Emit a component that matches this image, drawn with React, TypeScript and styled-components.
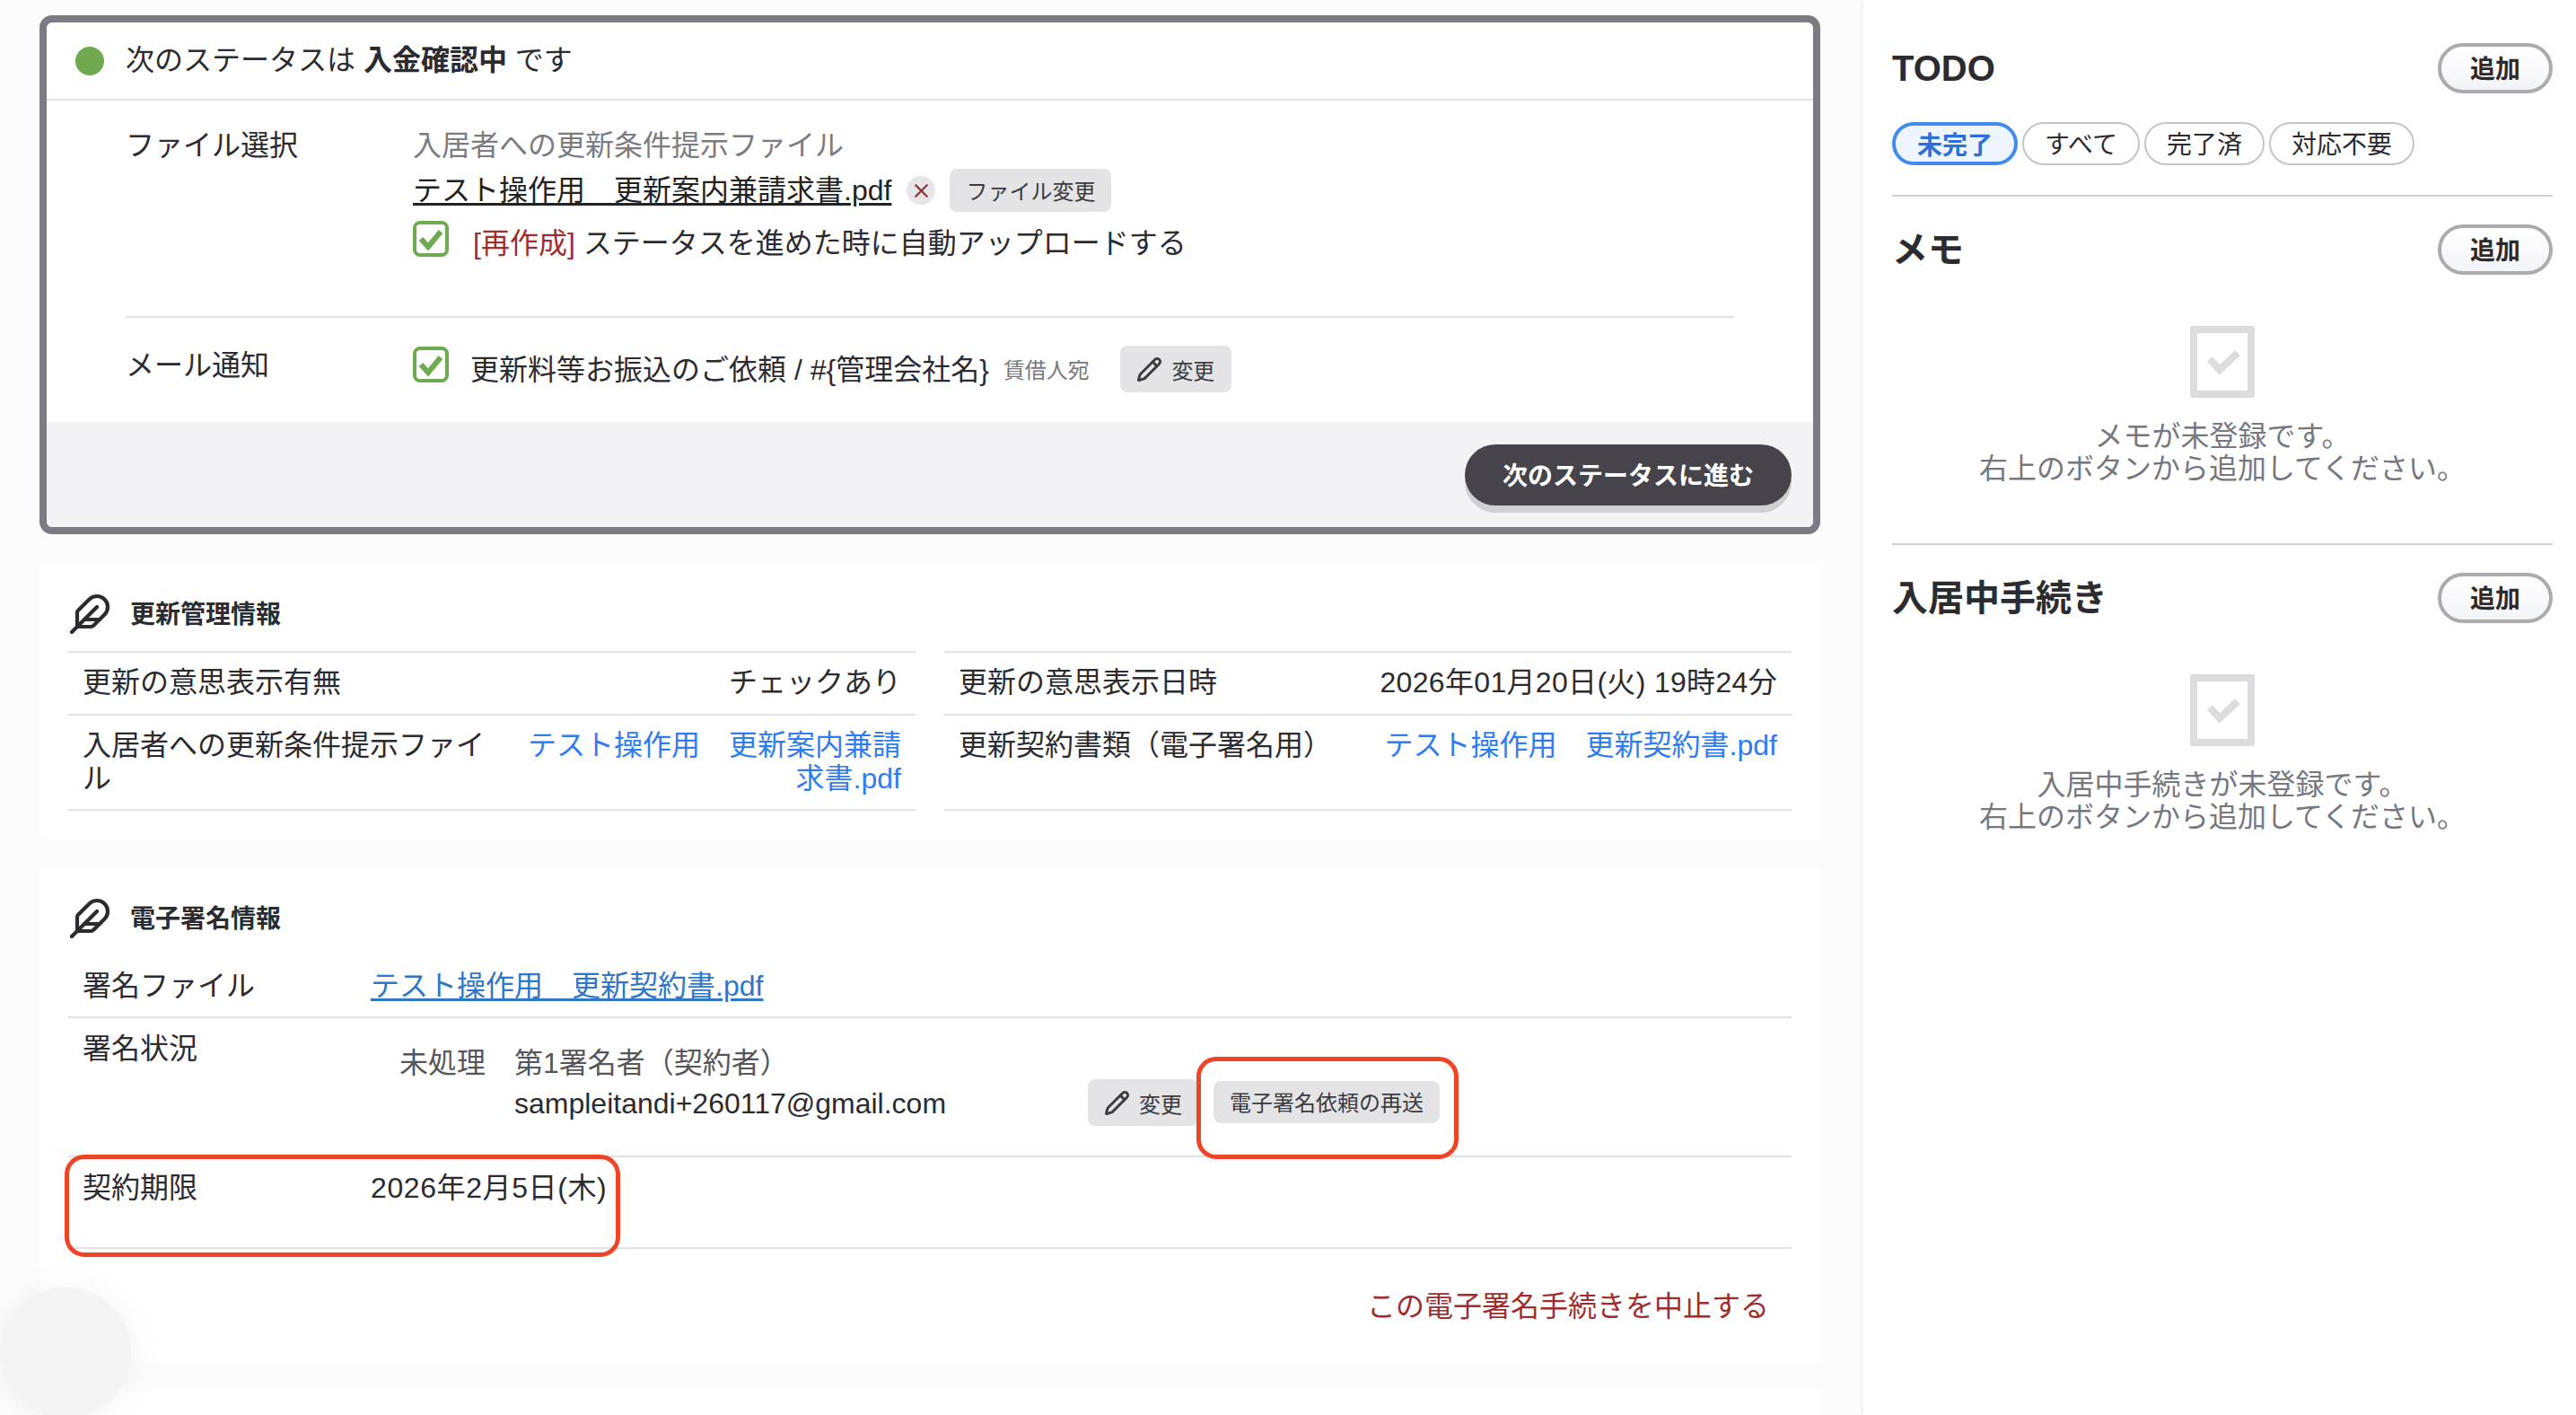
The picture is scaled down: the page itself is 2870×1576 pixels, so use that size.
import React from 'react'
import styled, { createGlobalStyle } from 'styled-components'
import { Feather, Pencil, X } from 'lucide-react'

const GlobalStyle = createGlobalStyle`
  html, body {
    margin: 0;
    padding: 0;
    background: #fcfcfc;
    font-family: "Liberation Sans", "Noto Sans CJK JP", sans-serif;
    color: #2b2b30;
  }
  * {
    box-sizing: border-box;
  }
`

const CheckBox = () => (
  <CheckFrame>
    <svg width="32" height="32" viewBox="0 0 32 32">
      <polyline points="5,16 13,25 27,8" fill="none" stroke="#6fa950" strokeWidth="6" />
    </svg>
  </CheckFrame>
)

const EmptyState = ({ text }: { text: string }) => (
  <Empty>
    <EmptyIcon>
      <svg width="56" height="64" viewBox="0 0 56 64">
        <polyline points="14,29 25,41 45,22" fill="none" stroke="#dcdcde" strokeWidth="8" />
      </svg>
    </EmptyIcon>
    <EmptyText>
      {text}
      <br />
      右上のボタンから追加してください。
    </EmptyText>
  </Empty>
)

const App = () => {
  return (
    <Page>
      <GlobalStyle />
      <Main>
        <StatusCard>
          <StatusHeader>
            <StatusDot />
            <span>
              次のステータスは <strong>入金確認中</strong> です
            </span>
          </StatusHeader>
          <StatusBody>
            <FileRow>
              <FormLabel>ファイル選択</FormLabel>
              <div>
                <HintLine>入居者への更新条件提示ファイル</HintLine>
                <FileLine>
                  <FileLink>テスト操作用　更新案内兼請求書.pdf</FileLink>
                  <RemoveBadge>
                    <X size={25} color="#a02c2c" strokeWidth={2.2} />
                  </RemoveBadge>
                  <GreyButton>ファイル変更</GreyButton>
                </FileLine>
                <CheckLine>
                  <CheckBox />
                  <CheckText>
                    <Danger>[再作成]</Danger> ステータスを進めた時に自動アップロードする
                  </CheckText>
                </CheckLine>
              </div>
            </FileRow>
            <MailRow>
              <FormLabel>メール通知</FormLabel>
              <MailLine>
                <CheckBox />
                <MailText>更新料等お振込のご依頼 / #{'{'}管理会社名{'}'}</MailText>
                <Recipient>賃借人宛</Recipient>
                <EditButton>
                  <Pencil size={29} strokeWidth={2.4} />
                  変更
                </EditButton>
              </MailLine>
            </MailRow>
          </StatusBody>
          <StatusFooter>
            <NextButton>次のステータスに進む</NextButton>
          </StatusFooter>
        </StatusCard>

        <InfoCard $gap={33}>
          <SectionTitle>
            <Feather size={48} strokeWidth={2.1} />
            更新管理情報
          </SectionTitle>
          <InfoGrid>
            <InfoCell $label={474}>
              <div>更新の意思表示有無</div>
              <InfoValue>チェックあり</InfoValue>
            </InfoCell>
            <InfoCell $label={440}>
              <div>更新の意思表示日時</div>
              <InfoValue>
                <DateText $spacing={0.32}>2026年01月20日(火) 19時24分</DateText>
              </InfoValue>
            </InfoCell>
            <InfoCell $label={474} $last>
              <div>入居者への更新条件提示ファイル</div>
              <InfoValue $link>テスト操作用　更新案内兼請求書.pdf</InfoValue>
            </InfoCell>
            <InfoCell $label={440} $last>
              <div>更新契約書類（電子署名用）</div>
              <InfoValue $link>テスト操作用　更新契約書.pdf</InfoValue>
            </InfoCell>
          </InfoGrid>
        </InfoCard>

        <InfoCard $gap={32}>
          <SectionTitle $compact>
            <Feather size={48} strokeWidth={2.1} />
            電子署名情報
          </SectionTitle>
          <SignRow $height={70}>
            <div>署名ファイル</div>
            <SignLink>テスト操作用　更新契約書.pdf</SignLink>
          </SignRow>
          <SignRow $height={155}>
            <div>署名状況</div>
            <SignerLine>
              <SignerStatus>未処理</SignerStatus>
              <SignerInfo>
                <SignerName>第1署名者（契約者）</SignerName>
                <div>sampleitandi+260117@gmail.com</div>
              </SignerInfo>
              <EditButton $inline>
                <Pencil size={29} strokeWidth={2.4} />
                変更
              </EditButton>
              <ResendButton>電子署名依頼の再送</ResendButton>
            </SignerLine>
          </SignRow>
          <SignRow $height={102}>
            <div>契約期限</div>
            <div>
              <DateText $spacing={0.6}>2026年2月5日(木)</DateText>
            </div>
          </SignRow>
          <CancelLine>
            <Danger>この電子署名手続きを中止する</Danger>
          </CancelLine>
          <Annotation $left={28} $top={318} $width={619} />
          <Annotation $left={1289} $top={209} $width={292} />
        </InfoCard>

        <BottomCard />
      </Main>

      <Sidebar>
        <SideSection>
          <SideHeader>
            <SideTitle>TODO</SideTitle>
            <AddButton>追加</AddButton>
          </SideHeader>
          <Chips>
            <Chip $active>未完了</Chip>
            <Chip>すべて</Chip>
            <Chip>完了済</Chip>
            <Chip>対応不要</Chip>
          </Chips>
        </SideSection>
        <SideSection $divider>
          <SideHeader>
            <SideTitle>メモ</SideTitle>
            <AddButton>追加</AddButton>
          </SideHeader>
          <EmptyState text="メモが未登録です。" />
        </SideSection>
        <SideSection $divider>
          <SideHeader>
            <SideTitle>入居中手続き</SideTitle>
            <AddButton>追加</AddButton>
          </SideHeader>
          <EmptyState text="入居中手続きが未登録です。" />
        </SideSection>
      </Sidebar>

      <FloatingBubble />
    </Page>
  )
}

const Page = styled.div`
  position: relative;
  display: flex;
  width: 2870px;
  height: 1576px;
  overflow: hidden;
  font-size: 32px;
  line-height: 37px;
`

const Main = styled.main`
  width: 2076px;
  flex: none;
  padding: 17px 48px 0 44px;
  display: flex;
  flex-direction: column;
`

const StatusCard = styled.section`
  height: 578px;
  flex: none;
  margin-bottom: 32px;
  border: 8px solid #7c7a82;
  border-radius: 14px;
  background: #fff;
  display: flex;
  flex-direction: column;
  overflow: hidden;
`

const StatusHeader = styled.div`
  height: 87px;
  flex: none;
  display: flex;
  align-items: center;
  gap: 24px;
  padding-left: 32px;
  border-bottom: 2px solid #e2e2e4;

  strong {
    font-weight: 700;
  }
`

const StatusDot = styled.span`
  width: 32px;
  height: 32px;
  border-radius: 50%;
  background: #6fa950;
`

const StatusBody = styled.div`
  height: 358px;
  flex: none;
  padding: 0 88px;
`

const FileRow = styled.div`
  display: grid;
  grid-template-columns: 320px 1fr;
  height: 242px;
  padding-top: 28px;
  border-bottom: 2px solid #e2e2e4;
`

const MailRow = styled.div`
  display: grid;
  grid-template-columns: 320px 1fr;
  padding-top: 31px;
`

const FormLabel = styled.div`
  line-height: 44px;
`

const HintLine = styled.div`
  height: 44px;
  line-height: 44px;
  color: #7b7b80;
`

const FileLine = styled.div`
  display: flex;
  align-items: center;
  height: 48px;
  margin-top: 4px;
`

const FileLink = styled.a`
  color: #222;
  text-decoration: underline;
  text-decoration-thickness: 3px;
  text-underline-offset: 3px;
`

const RemoveBadge = styled.span`
  width: 32px;
  height: 32px;
  margin-left: 17px;
  border-radius: 50%;
  background: #e6e6e8;
  display: flex;
  align-items: center;
  justify-content: center;
`

const GreyButton = styled.button`
  height: 48px;
  margin-left: 16px;
  padding: 0 18px 2px;
  border: none;
  border-radius: 8px;
  background: #e4e4e6;
  color: #3a3a40;
  font-family: inherit;
  font-size: 24px;
`

const CheckLine = styled.div`
  display: flex;
  margin-top: 10px;
`

const CheckFrame = styled.span`
  width: 40px;
  height: 40px;
  flex: none;
  border: 4px solid #6fa950;
  border-radius: 8px;
  background: #fff;
  display: flex;
`

const CheckText = styled.div`
  margin: 3px 0 0 27px;
  line-height: 44px;
`

const Danger = styled.span`
  color: #a02c2c;
`

const MailLine = styled.div`
  display: flex;
  align-items: center;
  height: 52px;

  ${CheckFrame} {
    align-self: flex-start;
    margin-top: 1px;
  }
`

const MailText = styled.span`
  margin: 2px 0 0 24px;
`

const Recipient = styled.span`
  margin: 3px 0 0 16px;
  font-size: 24px;
  color: #77777c;
`

const EditButton = styled.button<{ $inline?: boolean }>`
  height: 52px;
  width: ${props => (props.$inline ? '123px' : '124px')};
  flex: none;
  margin-left: ${props => (props.$inline ? '0' : '34px')};
  margin-top: ${props => (props.$inline ? '52px' : '0')};
  padding: 0;
  border: none;
  border-radius: 8px;
  background: #e4e4e6;
  color: #3a3a40;
  font-family: inherit;
  font-size: 24px;
  display: flex;
  align-items: center;
  justify-content: center;
  gap: 10px;
`

const StatusFooter = styled.div`
  flex: 1;
  background: #f3f3f5;
  display: flex;
  justify-content: flex-end;
  padding: 25px 24px 0 0;
`

const NextButton = styled.button`
  width: 364px;
  height: 68px;
  padding: 0 0 3px;
  border: none;
  border-radius: 34px;
  background: #46434a;
  box-shadow: 0 8px 0 #d0d0d4;
  color: #fff;
  font-family: inherit;
  font-size: 28px;
  font-weight: 700;
`

const InfoCard = styled.section<{ $gap: number }>`
  position: relative;
  flex: none;
  margin-bottom: ${props => props.$gap}px;
  padding: 0 32px 32px;
  background: #fff;
`

const SectionTitle = styled.h2<{ $compact?: boolean }>`
  display: flex;
  align-items: center;
  gap: 21px;
  height: ${props => (props.$compact ? '96px' : '98px')};
  margin: 0;
  padding-top: ${props => (props.$compact ? '14px' : '16px')};
  font-size: 28px;
  font-weight: 700;
`

const InfoGrid = styled.div`
  display: grid;
  grid-template-columns: 944px 944px;
  column-gap: 32px;
`

const InfoCell = styled.div<{ $label: number; $last?: boolean }>`
  display: grid;
  grid-template-columns: ${props => props.$label}px 1fr;
  padding: 15px 16px ${props => (props.$last ? '15px' : '16px')} 16px;
  border-top: 2px solid #e2e2e4;
  border-bottom: ${props => (props.$last ? '2px solid #e2e2e4' : 'none')};
`

const InfoValue = styled.div<{ $link?: boolean }>`
  text-align: right;
  color: ${props => (props.$link ? '#2f7bf0' : 'inherit')};
`

const DateText = styled.span<{ $spacing: number }>`
  letter-spacing: ${props => props.$spacing}px;
`

const SignRow = styled.div<{ $height: number }>`
  display: grid;
  grid-template-columns: 321px 1fr;
  height: ${props => props.$height}px;
  padding: 16px 0 0 16px;
  border-bottom: 2px solid #e2e2e4;
`

const SignLink = styled.a`
  color: #2e76c8;
  text-decoration: underline;
  text-underline-offset: 3px;
`

const SignerLine = styled.div`
  display: flex;
  align-items: flex-start;
  padding-left: 32px;
`

const SignerStatus = styled.div`
  width: 128px;
  flex: none;
  margin-top: 16px;
  color: #55555a;
`

const SignerInfo = styled.div`
  width: 639px;
  flex: none;
  margin-top: 16px;
`

const SignerName = styled.div`
  color: #55555a;
  margin-bottom: 8px;
`

const ResendButton = styled.button`
  height: 47px;
  width: 252px;
  flex: none;
  margin: 54px 0 0 17px;
  padding: 0 0 2px;
  border: none;
  border-radius: 8px;
  background: #e4e4e6;
  color: #3a3a40;
  font-family: inherit;
  font-size: 24px;
`

const CancelLine = styled.div`
  height: 94px;
  padding: 46px 25px 0 0;
  text-align: right;
`

const Annotation = styled.div<{ $left: number; $top: number; $width: number }>`
  position: absolute;
  left: ${props => props.$left}px;
  top: ${props => props.$top}px;
  width: ${props => props.$width}px;
  height: 114px;
  border: 5px solid #ee4526;
  border-radius: 22px;
`

const BottomCard = styled.div`
  flex: 1;
  background: #fff;
`

const Sidebar = styled.aside`
  flex: 1;
  padding: 48px 26px 0 32px;
  background: #fff;
  box-shadow: -2px 0 4px rgba(0, 0, 0, 0.06);
`

const SideSection = styled.div<{ $divider?: boolean }>`
  border-top: ${props => (props.$divider ? '2px solid #cfcfd2' : 'none')};
  padding-top: ${props => (props.$divider ? '31px' : '0')};
  padding-bottom: ${props => (props.$divider ? '65px' : '33px')};
`

const SideHeader = styled.div`
  display: flex;
  align-items: center;
  justify-content: space-between;
  height: 56px;
`

const SideTitle = styled.h3`
  margin: 0;
  font-size: 40px;
  font-weight: 700;
`

const AddButton = styled.button`
  width: 128px;
  height: 56px;
  padding: 0 0 2px;
  border: 4px solid #ababae;
  border-radius: 28px;
  background: linear-gradient(#ffffff, #f3f4f8);
  color: #2b2b30;
  font-family: inherit;
  font-size: 28px;
  font-weight: 700;
`

const Chips = styled.div`
  display: flex;
  gap: 5px;
  margin-top: 32px;
`

const Chip = styled.button<{ $active?: boolean }>`
  height: 48px;
  padding: 0 ${props => (props.$active ? '24px' : '23px')} 2px;
  border: ${props => (props.$active ? '4px solid #3f8cf0' : '2px solid #c4c4c8')};
  border-radius: 24px;
  background: ${props => (props.$active ? '#eef5ff' : '#fff')};
  color: ${props => (props.$active ? '#2c6fd8' : '#2b2b30')};
  font-family: inherit;
  font-size: 28px;
  font-weight: ${props => (props.$active ? 700 : 400)};
`

const Empty = styled.div`
  display: flex;
  flex-direction: column;
  align-items: center;
  margin-top: 57px;
`

const EmptyIcon = styled.div`
  width: 72px;
  height: 80px;
  border: 8px solid #dcdcde;
  border-radius: 3px;
  display: flex;
`

const EmptyText = styled.div`
  margin-top: 25px;
  line-height: 36px;
  text-align: center;
  color: #77777f;
`

const FloatingBubble = styled.div`
  position: absolute;
  left: 0;
  top: 1434px;
  width: 146px;
  height: 146px;
  border-radius: 50%;
  background: #f4f4f4;
  box-shadow: 0 0 40px rgba(0, 0, 0, 0.05);
`

export default App
